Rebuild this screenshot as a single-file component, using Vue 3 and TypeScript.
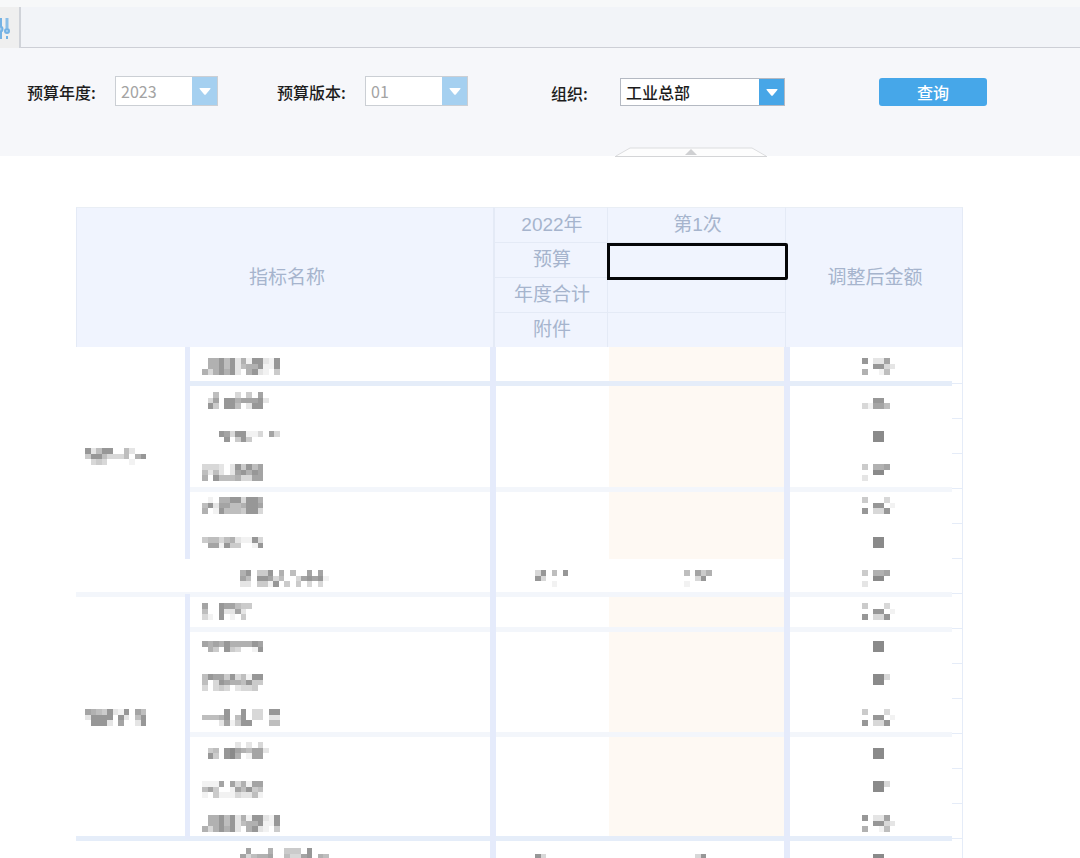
<script setup lang="ts">
import { ref } from 'vue'

interface BudgetRow {
  top: number
  name: string[]
  amount: string[]
  rule?: 'strong' | 'faint'
  group?: { span: number; top: number; cells: string[] }
  total?: { previous: string[]; first: string[] }
}

const PITCH = 5.56
const year = ref('2023')
const version = ref('01')
const org = ref('工业总部')

const dots = ['802270', '008832', '600150']
const block = ['0099', '0099']
const flag = ['40667', '00990', '20000']
const corner = ['40003', '008801', '80338']
const notch = ['00993', '0099']

const longName = ['06685826188218', '06685825668118', '63686820682104']

const rows: BudgetRow[] = [
  { top: 11, name: longName, amount: dots, rule: 'strong', group: { span: 6, top: 12, cells: ['82588005200', '48853335068', '03430000100'] } },
  { top: 8, name: ['00500030407', '037088677782', '08408850288'], amount: ['', '0088', '31775'] },
  { top: 12, name: ['00087388113073', '000080484'], amount: block },
  { top: 10, name: ['33320284857', '52520278687', '60855563377'], amount: flag, rule: 'faint' },
  { top: 8, name: ['01066883886', '58277556887', '60185554883'], amount: corner },
  { top: 13, name: ['45535621183', '07718440018'], amount: block },
  { top: 11, name: ['6804480605007070', '7508873500378781', '2204418040403030'], amount: flag, rule: 'faint', total: { previous: ['380508', '83', '0001'], first: ['50746', '0038', '1'] } },
  { top: 9, name: ['700877544', '50082272', '31080104'], amount: corner, rule: 'faint', group: { span: 7, top: 10, cells: ['76548218075', '28888082058', '08882070028'] } },
  { top: 12, name: ['76768666687', '06408430018'], amount: block },
  { top: 10, name: ['58774835188', '50387665844', '30343023340'], amount: notch },
  { top: 10, name: ['00008008033088', '55568058033022', '00027148800055'], amount: corner, rule: 'faint' },
  { top: 8, name: ['00000020203', '045089765772', '08408960177'], amount: ['', '0099', '0099'] },
  { top: 12, name: ['11170736177', '57400175845', '10411132251'], amount: notch },
  { top: 11, name: longName, amount: dots, rule: 'strong' },
  { top: 9, name: ['0700060044408000', '7356670053378065', '5244450062255044'], amount: ['', '0099', '0099'], total: { previous: ['000000', '83', '83'], first: ['00000', '0038', '0038'] } }
]

interface Tile { x: number; y: number; fill: string }

function tiles(cells: string[], top: number): Tile[] {
  const out: Tile[] = []
  cells.forEach((line, r) => {
    Array.from(line).forEach((c, i) => {
      const level = Number(c)
      if (level === 0) return
      const g = Math.round(255 - level * 13)
      out.push({ x: i * PITCH, y: top + r * PITCH, fill: `rgb(${g},${g},${g})` })
    })
  })
  return out
}

function widthOf(cells: string[]): number {
  return Math.ceil(Math.max(...cells.map((c) => c.length)) * PITCH)
}
</script>

<template>
  <main class="page">
    <header class="toolbar">
      <button class="tool" type="button" aria-label="设置">
        <svg width="12" height="24" viewBox="0 0 12 24" fill="none" stroke="#74b2e4" stroke-width="2">
          <path d="M1 2v8M1 16v7" />
          <circle cx="0" cy="13" r="2.500" fill="#a9d0ef" />
          <path d="M7 2v10" stroke-width="3" stroke="#8bbfe8" />
          <circle cx="7" cy="15" r="2" fill="#a9d0ef" />
          <path d="M7 20v3" />
        </svg>
      </button>
      <div class="strip"></div>
    </header>

    <form class="filters" @submit.prevent>
      <div class="field">
        <label for="year">预算年度:</label>
        <span class="combo muted">
          <select id="year" v-model="year" disabled><option>2023</option></select>
          <span class="arrow"><svg width="12" height="7" viewBox="0 0 12 7"><path d="M1 0h10q1 0 .3 1L7 6.300q-1 1-2 0L.7 1Q0 0 1 0z" fill="#fff" /></svg></span>
        </span>
      </div>
      <div class="field">
        <label for="version">预算版本:</label>
        <span class="combo muted">
          <select id="version" v-model="version" disabled><option>01</option></select>
          <span class="arrow"><svg width="12" height="7" viewBox="0 0 12 7"><path d="M1 0h10q1 0 .3 1L7 6.300q-1 1-2 0L.7 1Q0 0 1 0z" fill="#fff" /></svg></span>
        </span>
      </div>
      <div class="field org">
        <label for="org">组织:</label>
        <span class="combo">
          <select id="org" v-model="org"><option>工业总部</option></select>
          <span class="arrow"><svg width="12" height="7" viewBox="0 0 12 7"><path d="M1 0h10q1 0 .3 1L7 6.300q-1 1-2 0L.7 1Q0 0 1 0z" fill="#fff" /></svg></span>
        </span>
      </div>
      <button class="query" type="submit">查询</button>
      <button class="fold" type="button" aria-label="收起">
        <svg width="152" height="10" viewBox="0 0 152 10">
          <path d="M1 9 15 1H137L151 9" fill="#fdfdfd" stroke="#dcdddf" />
          <path d="M0 9.500H152" stroke="#d4d5d7" />
          <path d="M70 8 76 2 82 8z" fill="#cfd0d2" />
        </svg>
      </button>
    </form>

    <section class="sheet">
      <table>
        <colgroup>
          <col class="c-group" /><col /><col class="c-prev" /><col class="c-first" /><col class="c-amount" /><col class="c-edge" />
        </colgroup>
        <thead>
          <tr>
            <th colspan="2" rowspan="4" class="wide">指标名称</th>
            <th class="lead">2022年</th>
            <th>第1次</th>
            <th colspan="2" rowspan="4" class="outer">调整后金额</th>
          </tr>
          <tr><th class="lead">预算</th><th class="active"></th></tr>
          <tr><th class="lead">年度合计</th><th></th></tr>
          <tr class="last"><th class="lead">附件</th><th></th></tr>
        </thead>
        <tbody>
          <tr v-for="(row, i) in rows" :key="i" :class="[row.rule, rows[i - 1]?.rule ? 'after-' + rows[i - 1].rule : '', { total: row.total, first: i === 0 }]">
            <td v-if="row.group" :rowspan="row.group.span" class="group" :class="{ closing: i > 0 }">
              <svg :width="widthOf(row.group.cells)" height="35" shape-rendering="crispEdges">
                <rect v-for="(t, k) in tiles(row.group.cells, row.group.top)" :key="k" :x="t.x" :y="t.y" :width="PITCH" :height="PITCH" :fill="t.fill" />
              </svg>
            </td>
            <td class="name" :colspan="row.total ? 2 : 1">
              <svg :width="widthOf(row.name)" height="35" shape-rendering="crispEdges">
                <rect v-for="(t, k) in tiles(row.name, row.top)" :key="k" :x="t.x" :y="t.y" :width="PITCH" :height="PITCH" :fill="t.fill" />
              </svg>
            </td>
            <td class="prev">
              <svg v-if="row.total" :width="widthOf(row.total.previous)" height="35" shape-rendering="crispEdges">
                <rect v-for="(t, k) in tiles(row.total.previous, row.top)" :key="k" :x="t.x" :y="t.y" :width="PITCH" :height="PITCH" :fill="t.fill" />
              </svg>
            </td>
            <td class="adjust">
              <svg v-if="row.total" :width="widthOf(row.total.first)" height="35" shape-rendering="crispEdges">
                <rect v-for="(t, k) in tiles(row.total.first, row.top)" :key="k" :x="t.x" :y="t.y" :width="PITCH" :height="PITCH" :fill="t.fill" />
              </svg>
            </td>
            <td class="amount">
              <svg :width="widthOf(row.amount)" height="35" shape-rendering="crispEdges">
                <rect v-for="(t, k) in tiles(row.amount, row.top)" :key="k" :x="t.x" :y="t.y" :width="PITCH" :height="PITCH" :fill="t.fill" />
              </svg>
            </td>
            <td class="edge"></td>
          </tr>
        </tbody>
      </table>
    </section>
  </main>
</template>

<style>
body {
  margin: 0;
  background: #fff;
}
</style>

<style scoped>
.page {
  height: 100vh;
  overflow: hidden;
  background: #fff;
  color: #1c1c1c;
  font: 16px/24px "Noto Sans CJK SC", sans-serif;
}

.toolbar {
  display: flex;
  height: 48px;
  box-sizing: border-box;
  padding-top: 7px;
  background: #f7f8f9;
}

.tool {
  display: flex;
  align-items: center;
  width: 21px;
  padding: 0;
  border: 0;
  border-right: 2px solid #d0d3d9;
  background: #efefef;
}

.strip {
  flex: 1;
  border-bottom: 1px solid #cdcfd6;
  background: #f2f4f8;
}

.filters {
  position: relative;
  display: grid;
  grid-template-columns: 250px 274px 328px auto;
  align-items: start;
  box-sizing: border-box;
  height: 108px;
  padding: 28px 27px 0;
  background: #f6f7fa;
}

.field {
  display: flex;
  align-items: center;
}

.field label {
  width: 88px;
  padding-top: 2px;
  font-weight: 500;
}

.field.org {
  padding-top: 2px;
}

.field.org label {
  width: 69px;
}

.combo {
  display: flex;
  box-sizing: border-box;
  width: 103px;
  height: 30px;
  border: 1px solid #b4b9c2;
  background: #fff;
}

.org .combo {
  width: 165px;
  height: 28px;
}

.combo.muted {
  border-color: #cbcfd4;
}

.combo select {
  flex: 1;
  min-width: 0;
  padding: 0 0 0 5px;
  border: 0;
  appearance: none;
  background: transparent;
  color: #1c1c1c;
  font: inherit;
  font-weight: 500;
  opacity: 1;
}

.combo.muted select {
  color: #a3a3a3;
  font-weight: 400;
}

.arrow {
  display: flex;
  align-items: center;
  justify-content: center;
  width: 25px;
  padding-top: 1px;
  background: #47a6e7;
}

.muted .arrow {
  background: #a5d0f0;
}

.query {
  width: 108px;
  height: 28px;
  margin-top: 2px;
  padding: 0;
  border: 0;
  border-radius: 3px;
  background: #46a7e9;
  color: #fff;
  font: 500 16px/28px "Noto Sans CJK SC", sans-serif;
}

.fold {
  position: absolute;
  left: 64%;
  bottom: -1px;
  display: block;
  padding: 0;
  border: 0;
  background: none;
  transform: translateX(-50%);
}

.fold svg {
  display: block;
}

.sheet {
  padding: 51px 117px 0 76px;
}

table {
  width: 100%;
  table-layout: fixed;
  border-spacing: 0;
}

.c-group {
  width: 112px;
}

.c-prev {
  width: 114px;
}

.c-first {
  width: 178px;
}

.c-amount {
  width: 167px;
}

.c-edge {
  width: 11px;
}

th,
td {
  box-sizing: border-box;
  height: 35px;
  padding: 0;
}

th {
  position: relative;
  padding-left: 2px;
  border-bottom: 1px solid #e4eaf6;
  border-left: 1px solid #e4eaf6;
  background: #f0f4fe;
  color: #a6b4cd;
  font: 400 19px/24px "Liberation Sans", "Noto Sans CJK SC", sans-serif;
}

thead tr:first-child th {
  height: 36px;
  border-top: 1px solid #e9eef5;
}

thead .last th {
  height: 34px;
}

th[rowspan],
.last th {
  border-bottom: 0;
}

.wide {
  padding-left: 4px;
}

.lead {
  border-left-width: 2px;
}

.outer {
  border-right: 1px solid #e4eaf6;
}

.active::after {
  content: "";
  position: absolute;
  z-index: 1;
  top: 0;
  right: -3px;
  bottom: -3px;
  left: -1px;
  border: 3px solid #050608;
  border-radius: 0 2px 2px 0;
}

td {
  --rule: #e5edf9;
  --top: 0px;
  --bottom: 0px;
  --left: 0px;
  --right: 0px;
  vertical-align: top;
  box-shadow:
    inset var(--left) 0 #e5ebfb,
    inset var(--right) 0 #e5ebfb,
    inset 0 var(--top) var(--rule-top, #e5edf9),
    inset 0 var(--bottom) var(--rule);
}

td svg {
  display: block;
}

.first td {
  height: 37px;
}

.strong td {
  --bottom: -3px;
}

.faint td {
  --bottom: -2px;
  --rule: #f3f6fb;
}

.after-strong td {
  --top: 2px;
}

.after-faint td {
  --top: 3px;
  --rule-top: #f3f6fb;
}

.group {
  padding-left: 9px;
  vertical-align: middle;
}

tr .group {
  --right: -3px;
  --bottom: 0px;
}

tr.first .group {
  --top: 0px;
}

tr .group.closing {
  --bottom: -3px;
  --rule: #e5edf9;
}

.name {
  --left: 2px;
  --right: -3px;
  padding-left: 14px;
}

.total .name {
  --left: 0px;
  padding-left: 0;
}

.total .name svg {
  margin: 0 auto;
}

.prev {
  --left: 3px;
  padding-left: 42px;
}

.adjust {
  --right: -1px;
  padding-left: 77px;
  background: linear-gradient(90deg, #fff 2px, #fef9f3 2px);
}

.total .adjust {
  background: #fff;
}

.amount {
  --left: 5px;
  padding-left: 77px;
}

tr .edge {
  border-right: 1px solid #e5ecf8;
  border-bottom: 1px solid #e5ecf8;
  box-shadow: none;
}
</style>
